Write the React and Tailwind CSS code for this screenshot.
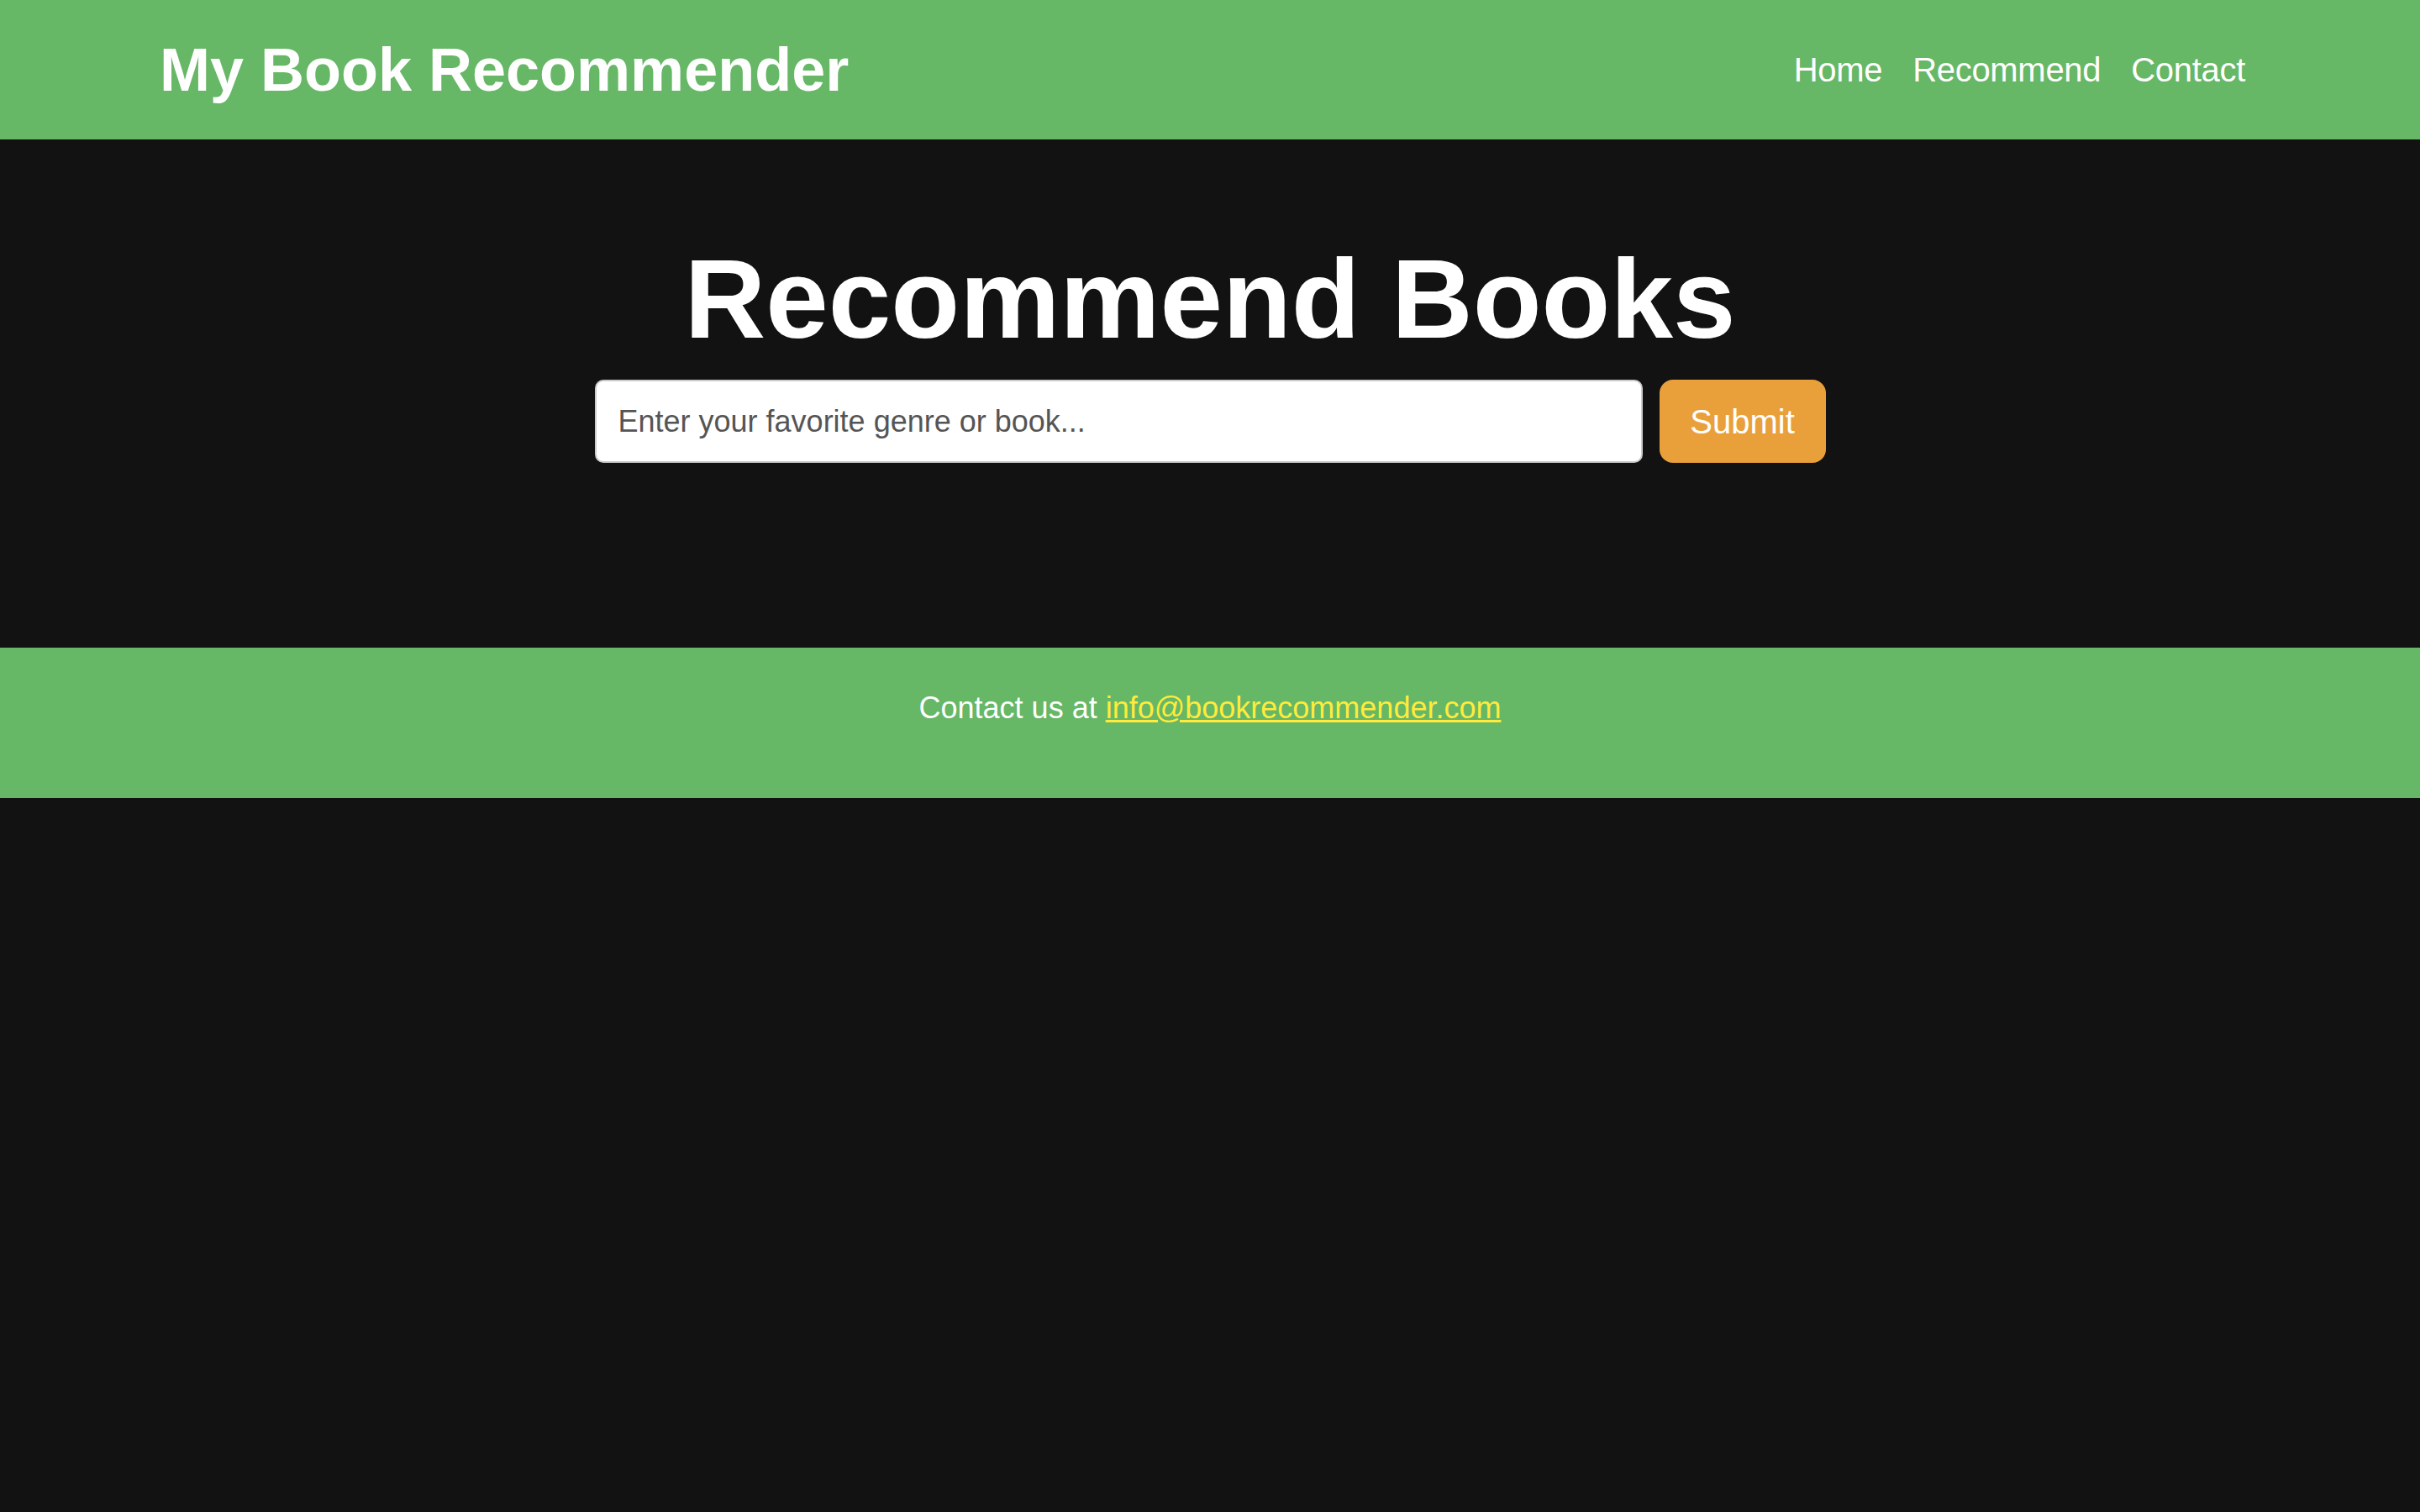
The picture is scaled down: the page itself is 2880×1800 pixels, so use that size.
export default function App() {
  return (
    <div className="min-h-screen bg-[#121212] font-['Liberation_Sans',Arial,sans-serif]">
      <header className="h-[166px] bg-[#66b766] flex items-center justify-between pl-[190px] pr-[190px]">
        <h1 className="text-[72px] font-bold text-white leading-[83px]">My Book Recommender</h1>
        <nav className="flex items-center">
          <a className="mx-[18px] text-[40px] text-white leading-[46px] tracking-[-0.3px]" href="#">Home</a>
          <a className="mx-[18px] text-[40px] text-white leading-[46px] tracking-[-0.3px]" href="#">Recommend</a>
          <a className="mx-[18px] text-[40px] text-white leading-[46px] tracking-[-0.3px]" href="#">Contact</a>
        </nav>
      </header>
      <main className="h-[605px] flex flex-col items-center pt-[113px]">
        <h2 className="text-[134px] font-bold text-white leading-[154px] text-center">Recommend Books</h2>
        <div className="mt-[19px] flex items-center gap-[20px]">
          <input
            type="text"
            placeholder="Enter your favorite genre or book..."
            className="w-[1247px] h-[99px] bg-white border-2 border-[#cccccc] rounded-[10px] pl-[26px] text-[36px] text-[#333] placeholder:text-[#555555] outline-none"
          />
          <button className="w-[198px] h-[99px] bg-[#e9a03b] rounded-[16px] text-white text-[40px]">Submit</button>
        </div>
      </main>
      <footer className="h-[179px] bg-[#66b766] pt-[51px] text-center">
        <p className="text-[36px] leading-[42px] text-white">
          Contact us at <a href="#" className="text-[#ffeb3b] underline">info@bookrecommender.com</a>
        </p>
      </footer>
    </div>
  );
}
